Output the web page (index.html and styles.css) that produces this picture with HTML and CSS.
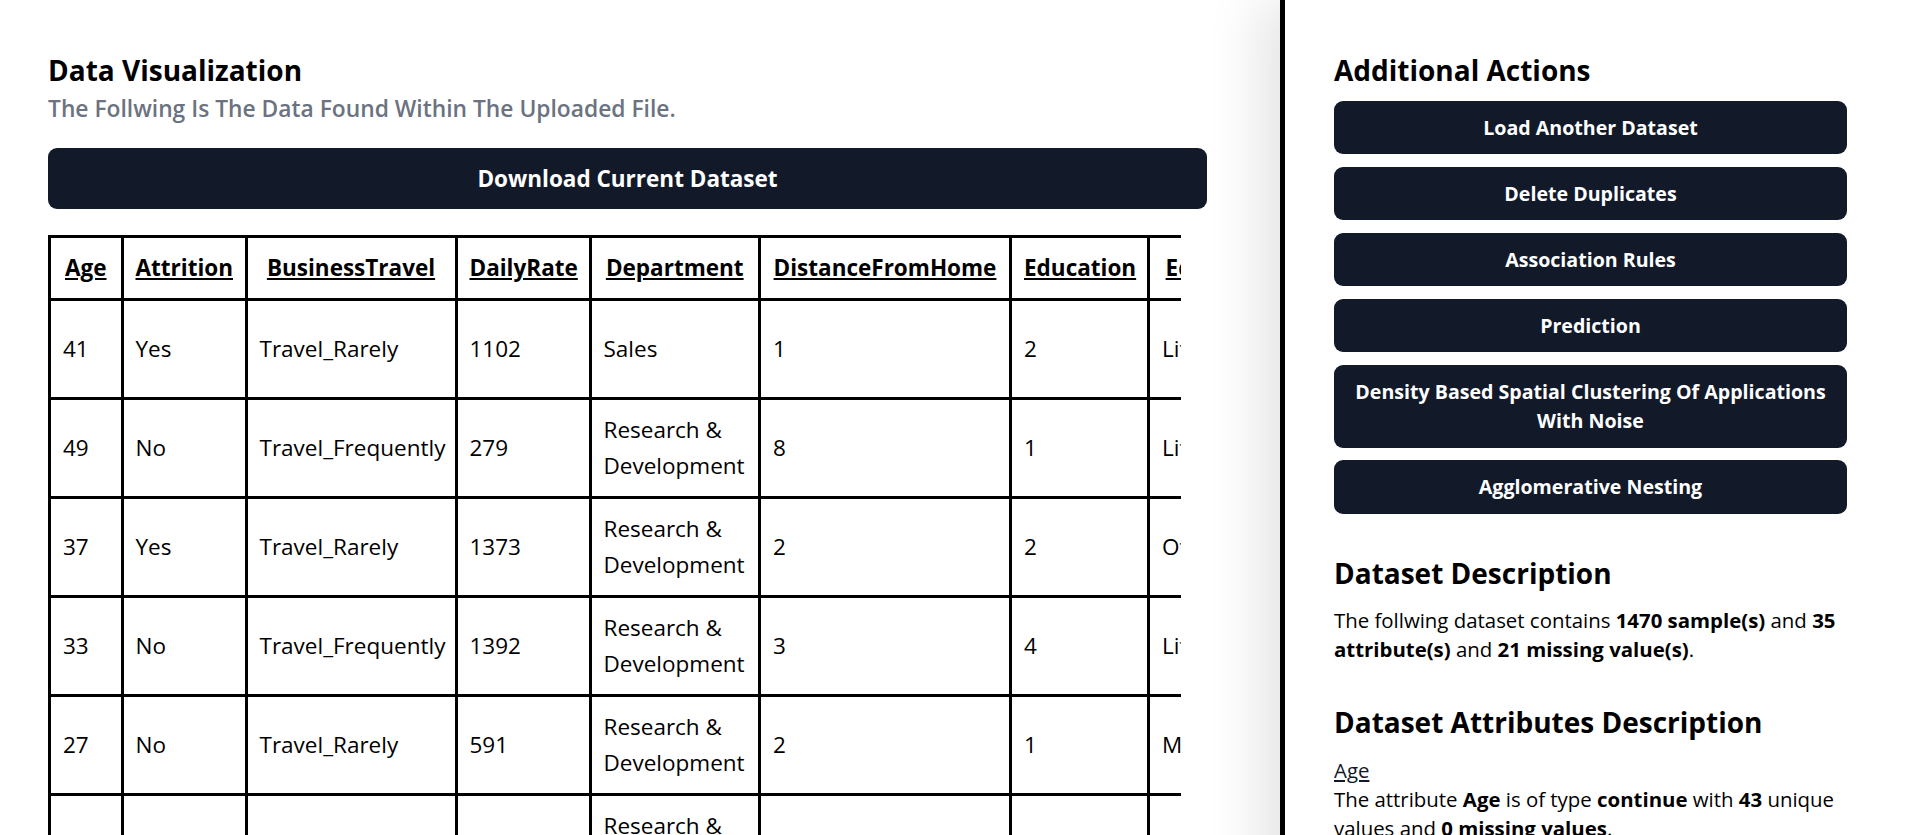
FILE: index.html
```html
<!DOCTYPE html>
<html lang="en">
<head>
<meta charset="utf-8">
<title>Data Visualization</title>
<link rel="stylesheet" href="styles.css">
</head>
<body>
<div class="layout">
  <main class="main">
    <h2 class="title">Data Visualization</h2>
    <p class="subtitle">The Follwing Is The Data Found Within The Uploaded File.</p>
    <button class="btn btn-download">Download Current Dataset</button>
    <div class="table-wrap">
      <table class="data">
        <colgroup>
          <col class="c-age"><col class="c-attr"><col class="c-travel"><col class="c-rate"><col class="c-dept"><col class="c-dist"><col class="c-edu"><col class="c-field"><col class="c-more">
        </colgroup>
        <thead>
          <tr class="head-row">
            <th>Age</th><th>Attrition</th><th>BusinessTravel</th><th>DailyRate</th><th>Department</th><th>DistanceFromHome</th><th>Education</th><th>EducationField</th><th>EmployeeCount</th>
          </tr>
        </thead>
        <tbody>
          <tr class="row"><td>41</td><td>Yes</td><td>Travel_Rarely</td><td>1102</td><td>Sales</td><td>1</td><td>2</td><td>Life Sciences</td><td>1</td></tr>
          <tr class="row"><td>49</td><td>No</td><td>Travel_Frequently</td><td>279</td><td>Research &amp; Development</td><td>8</td><td>1</td><td>Life Sciences</td><td>1</td></tr>
          <tr class="row"><td>37</td><td>Yes</td><td>Travel_Rarely</td><td>1373</td><td>Research &amp; Development</td><td>2</td><td>2</td><td>Other</td><td>1</td></tr>
          <tr class="row"><td>33</td><td>No</td><td>Travel_Frequently</td><td>1392</td><td>Research &amp; Development</td><td>3</td><td>4</td><td>Life Sciences</td><td>1</td></tr>
          <tr class="row"><td>27</td><td>No</td><td>Travel_Rarely</td><td>591</td><td>Research &amp; Development</td><td>2</td><td>1</td><td>Medical</td><td>1</td></tr>
          <tr class="row"><td>32</td><td>No</td><td>Travel_Frequently</td><td>1005</td><td>Research &amp; Development</td><td>2</td><td>2</td><td>Life Sciences</td><td>1</td></tr>
          <tr class="row"><td>59</td><td>No</td><td>Travel_Rarely</td><td>1324</td><td>Research &amp; Development</td><td>3</td><td>3</td><td>Medical</td><td>1</td></tr>
        </tbody>
      </table>
    </div>
  </main>
  <aside class="side">
    <h2 class="title">Additional Actions</h2>
    <div class="actions">
      <button class="btn btn-action">Load Another Dataset</button>
      <button class="btn btn-action">Delete Duplicates</button>
      <button class="btn btn-action">Association Rules</button>
      <button class="btn btn-action">Prediction</button>
      <button class="btn btn-action">Density Based Spatial Clustering Of Applications With Noise</button>
      <button class="btn btn-action">Agglomerative Nesting</button>
    </div>
    <h2 class="title section-title">Dataset Description</h2>
    <p class="desc">The follwing dataset contains <b>1470 sample(s)</b> and <b>35 attribute(s)</b> and <b>21 missing value(s)</b>.</p>
    <h2 class="title section-title attrs-title">Dataset Attributes Description</h2>
    <div class="attr">
      <a class="attr-name" href="#">Age</a>
      <p class="attr-text">The attribute <b>Age</b> is of type <b>continue</b> with <b>43</b> unique values and <b>0 missing values</b>.</p>
    </div>
    <div class="attr">
      <a class="attr-name" href="#">Attrition</a>
      <p class="attr-text">The attribute <b>Attrition</b> is of type <b>discrete</b> with <b>2</b> unique values and <b>0 missing values</b>.</p>
    </div>
  </aside>
</div>
</body>
</html>
```

FILE: styles.css
```css
html {
  scrollbar-width: none;
}
body {
  margin: 0;
  background: #ffffff;
  color: #000000;
  font-family: "Open Sans", "Noto Sans", "Liberation Sans", sans-serif;
}
.layout {
  display: grid;
  grid-template-columns: 1280px 1fr;
  min-height: 100vh;
}
.main {
  padding: 52px 73px 40px 48px;
  min-width: 0;
}
.side {
  border-left: 5px solid #000000;
  padding: 52px 73px 40px 49px;
  background: #ffffff;
  box-shadow: -22px 0 50px rgba(0, 0, 0, 0.10);
  min-width: 0;
}
.title {
  margin: 0;
  font-size: 28px;
  line-height: 36px;
  font-weight: 700;
  color: #000000;
}
.subtitle {
  margin: 6px 0 0;
  font-size: 22.8px;
  line-height: 29px;
  font-weight: 600;
  color: #6b7280;
}
.btn {
  display: block;
  width: 100%;
  border: 0;
  border-radius: 9px;
  background: #121a2a;
  color: #ffffff;
  font-family: inherit;
  font-weight: 700;
  text-align: center;
  cursor: pointer;
}
.btn-download {
  margin-top: 25px;
  padding: 12px 16px;
  font-size: 22.5px;
  line-height: 37px;
}
.table-wrap {
  margin-right: 26px;
  overflow: hidden;
  padding-left: 2px;
  margin-left: -2px;
  padding-top: 2px;
  margin-top: 24px;
}
.data {
  border-collapse: collapse;
  table-layout: fixed;
  width: 1596px;
  font-size: 22.5px;
  line-height: 36px;
}
.c-age { width: 72.5px; }
.c-attr { width: 124px; }
.c-travel { width: 210px; }
.c-rate { width: 134px; }
.c-dept { width: 169.5px; }
.c-dist { width: 251px; }
.c-edu { width: 138px; }
.c-field { width: 200px; }
.c-more { width: 297px; }
.data th,
.data td {
  border: 3px solid #000000;
  padding: 12px;
  vertical-align: middle;
  overflow: hidden;
}
.data th {
  font-weight: 700;
  text-decoration: underline;
  text-align: center;
  white-space: nowrap;
}
.data td {
  text-align: left;
  font-weight: 400;
}
.head-row {
  height: 63px;
}
.row {
  height: 99px;
}
.actions {
  margin-top: 13px;
  display: flex;
  flex-direction: column;
  gap: 12.6px;
}
.btn-action {
  padding: 12px 14px;
  font-size: 19.6px;
  line-height: 29.4px;
}
.section-title {
  margin-top: 41px;
}
.attrs-title {
  margin-top: 39px;
}
.desc {
  margin: 15px 0 0;
  font-size: 20.4px;
  line-height: 29.4px;
}
.attr {
  margin-top: 16px;
  font-size: 20.4px;
  line-height: 29.4px;
}
.attr-name {
  color: #111827;
  text-decoration: underline;
}
.attr-text {
  margin: 0;
}
```
